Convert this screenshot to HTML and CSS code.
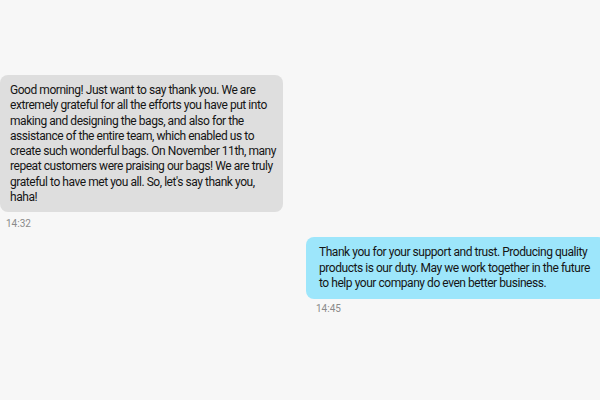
FILE: index.html
```html
<!DOCTYPE html>
<html>
<head>
<meta charset="utf-8">
<link rel="stylesheet" href="styles.css">
</head>
<body>
<div class="chat">
  <div class="msg received">
    <div class="bubble">Good morning! Just want to say thank you. We are extremely grateful for all the efforts you have put into making and designing the bags, and also for the assistance of the entire team, which enabled us to create such wonderful bags. On November 11th, many repeat customers were praising our bags! We are truly grateful to have met you all. So, let's say thank you, haha!</div>
    <div class="time">14:32</div>
  </div>
  <div class="msg sent">
    <div class="bubble">Thank you for your support and trust. Producing quality products is our duty. May we work together in the future to help your company do even better business.</div>
    <div class="time">14:45</div>
  </div>
</div>
</body>
</html>
```
FILE: styles.css
```css
html, body {
  margin: 0;
  padding: 0;
  width: 600px;
  height: 400px;
  overflow: hidden;
  background: #f7f7f7;
  font-family: Roboto, "Liberation Sans", sans-serif;
}
.chat {
  display: flex;
  flex-direction: column;
  padding-top: 75px;
}
.msg {
  display: flex;
  flex-direction: column;
}
.bubble {
  font-size: 12px;
  line-height: 15.3px;
  letter-spacing: -0.45px;
  color: #151515;
  border-radius: 8px;
  box-sizing: border-box;
}
.received .bubble {
  width: 283px;
  background: #dedede;
  padding: 8px 4px 7px 10px;
}
.received .time {
  padding-left: 6px;
  margin-top: 6px;
}
.sent {
  margin-top: 7px;
  margin-left: 306px;
}
.sent .bubble {
  width: 300px;
  background: #9de6fb;
  padding: 8px 6px 8px 13px;
}
.sent .time {
  padding-left: 10px;
  margin-top: 4px;
}
.time {
  font-size: 10px;
  line-height: 12px;
  color: #8a8a8a;
}
```
